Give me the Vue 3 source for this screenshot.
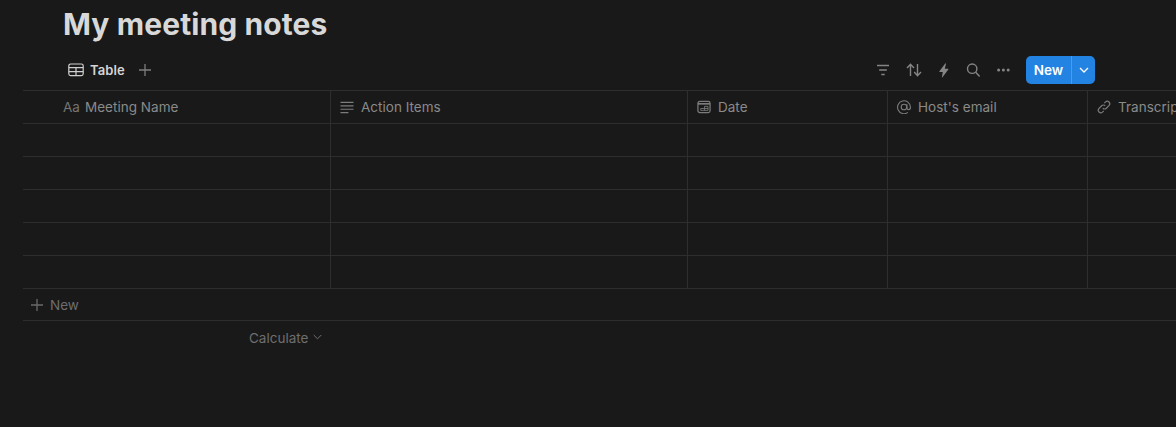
<script setup>
const columns = [
  { name: 'Meeting Name', width: 308, icon: 'aa' },
  { name: 'Action Items', width: 357, icon: 'text' },
  { name: 'Date', width: 200, icon: 'date' },
  { name: "Host's email", width: 200, icon: 'at' },
  { name: 'Transcript', width: 200, icon: 'link' },
]
const rows = [1, 2, 3, 4, 5]
</script>

<template>
  <div class="page">
    <h1 class="title">My meeting notes</h1>
    <div class="toolbar">
      <div class="tabs">
        <svg class="table-icon" width="16" height="14" viewBox="0 0 16 14" fill="none" stroke="#cfcfcf" stroke-width="1.2">
          <rect x="0.8" y="1" width="14.4" height="11.6" rx="1.8" />
          <path d="M0.8 4.7H15.2M0.8 8.6H15.2M8 4.7V12.6" />
        </svg>
        <span class="tab-label">Table</span>
        <svg class="tab-plus" width="14" height="14" viewBox="0 0 14 14" stroke="#7d7d7d" stroke-width="1.3">
          <path d="M7 1V13M1 7H13" />
        </svg>
      </div>
      <div class="actions">
        <svg width="14" height="12" viewBox="0 0 14 12" stroke="#858585" stroke-width="1.6" fill="none"><path d="M1 1.5H13M3.2 6H10.8M5.3 10.5H8.7" /></svg>
        <svg width="16" height="14" viewBox="0 0 16 14" stroke="#858585" stroke-width="1.4" fill="none"><path d="M4.5 13V1.5M1 5L4.5 1.3L8 5M11.5 1V12.5M8.2 9L11.5 12.7L15 9" /></svg>
        <svg width="12" height="15" viewBox="0 0 12 15" fill="#858585"><path d="M7.2 0.5 1.4 8.3Q1.1 8.9 1.7 9H4.8L3.9 14.2Q4 14.7 4.5 14.3L10.3 6.4Q10.6 5.8 10 5.7H6.8L8 0.8Q7.8 0.1 7.2 0.5Z" /></svg>
        <svg width="14" height="14" viewBox="0 0 14 14" stroke="#858585" stroke-width="1.4" fill="none"><circle cx="6.2" cy="5.7" r="4.7" /><path d="M9.7 9.2L13.6 13.4" /></svg>
        <svg width="14" height="4" viewBox="0 0 14 4" fill="#858585"><circle cx="2.6" cy="2" r="1.5" /><circle cx="7.4" cy="2" r="1.5" /><circle cx="12.2" cy="2" r="1.5" /></svg>
        <div class="new-button">
          <span class="new-label">New</span>
          <span class="new-arrow">
            <svg width="10" height="6" viewBox="0 0 10 6" stroke="#fff" stroke-width="1.3" fill="none"><path d="M1 1L5 5L9 1" /></svg>
          </span>
        </div>
      </div>
    </div>

    <div class="table">
      <div class="row head">
        <div
          v-for="(col, i) in columns"
          :key="col.name"
          class="cell"
          :class="{ first: i === 0 }"
          :style="{ width: col.width + 'px' }"
        >
          <span v-if="col.icon === 'aa'" class="aa">Aa</span>
          <svg v-else-if="col.icon === 'text'" class="col-icon" width="14" height="13" viewBox="0 0 15 13" stroke="#7c7c7c" stroke-width="1.2" fill="none">
            <path d="M0.5 1H14.5M0.5 4.7H14.5M0.5 8.4H14.5M0.5 12H9" />
          </svg>
          <svg v-else-if="col.icon === 'date'" class="col-icon" width="14" height="14" viewBox="0 0 15 14" fill="none" stroke="#7c7c7c">
            <rect x="1" y="1" width="13" height="12" rx="2" stroke-width="1.3" />
            <path d="M1 3.6H14" stroke-width="1.8" />
            <path d="M8 6.3H11.8V10.6H4V8.6H11.8M8 6.3V10.6" stroke-width="0.9" />
          </svg>
          <svg v-else-if="col.icon === 'at'" class="col-icon" width="14" height="14" viewBox="0 0 15 15" fill="none" stroke="#7c7c7c" stroke-width="1.2">
            <path d="M11.6 13.3A6.9 6.9 0 1 1 14.4 7.5C14.4 9.3 13.6 10.3 12.4 10.3C11.2 10.3 10.6 9.5 10.6 8.3V4.5" />
            <circle cx="7.5" cy="7.5" r="3" />
          </svg>
          <svg v-else class="col-icon" width="14" height="14" viewBox="0 0 15 15" fill="none" stroke="#7c7c7c" stroke-width="1.3">
            <path d="M6.2 8.8A2.6 2.6 0 0 0 10 8.8L13 5.8A2.7 2.7 0 0 0 9.2 2L7.8 3.4" />
            <path d="M8.8 6.2A2.6 2.6 0 0 0 5 6.2L2 9.2A2.7 2.7 0 0 0 5.8 13L7.2 11.6" />
          </svg>
          <span class="col-name">{{ col.name }}</span>
        </div>
      </div>
      <div v-for="r in rows" :key="r" class="row">
        <div
          v-for="col in columns"
          :key="col.name"
          class="cell"
          :style="{ width: col.width + 'px' }"
        ></div>
      </div>
      <div class="new-row">
        <svg width="12" height="12" viewBox="0 0 12 12" stroke="#6a6a6a" stroke-width="1.3"><path d="M6 0V12M0 6H12" /></svg>
        <span>New</span>
      </div>
      <div class="calc-row">
        <div class="calc">
          <span>Calculate</span>
          <svg width="9" height="6" viewBox="0 0 9 6" stroke="#707070" stroke-width="1" fill="none"><path d="M0.7 1L4.5 4.8L8.3 1" /></svg>
        </div>
      </div>
    </div>
  </div>
</template>

<style scoped>
.page {
  width: 1176px;
  height: 427px;
  overflow: hidden;
  background: #191919;
  font-family: Inter, "Liberation Sans", sans-serif;
  padding: 0 0 0 23px;
  box-sizing: border-box;
}
.title {
  margin: 0;
  padding: 7px 0 0 40px;
  height: 50px;
  box-sizing: border-box;
  font-size: 30px;
  line-height: 34px;
  font-weight: 700;
  color: #d8d8d8;
  letter-spacing: 0.1px;
}
.toolbar {
  height: 40px;
  display: flex;
  align-items: center;
  justify-content: space-between;
  width: 1072px;
  padding-left: 45px;
  box-sizing: border-box;
}
.tabs { display: flex; align-items: center; }
.tab-label {
  margin-left: 6px;
  font-size: 13px;
  font-weight: 600;
  color: #d4d4d4;
  letter-spacing: 0.1px;
}
.tab-plus { margin-left: 13px; }
.actions { display: flex; align-items: center; gap: 16px; }
.new-button {
  height: 28px;
  display: flex;
  border-radius: 5px;
  background: #2383e2;
  color: #fff;
  font-size: 13.5px;
  font-weight: 600;
}
.new-label {
  width: 45px;
  display: flex;
  align-items: center;
  justify-content: center;
}
.new-arrow {
  width: 23px;
  display: flex;
  align-items: center;
  justify-content: center;
  border-left: 1px solid #4d9be8;
}
.table { width: 1153px; }
.row {
  display: flex;
  height: 33px;
  box-sizing: border-box;
  border-top: 1px solid #2e2e2e;
}
.cell {
  flex: none;
  height: 100%;
  box-sizing: border-box;
  border-right: 1px solid #2e2e2e;
  display: flex;
  align-items: center;
  padding-left: 9px;
}
.cell:last-child { border-right: none; }
.cell.first { padding-left: 40px; }
.aa {
  font-size: 13.5px;
  color: #757575;
  width: 22px;
}
.col-icon { flex: none; margin-right: 7px; }
.col-name {
  font-size: 13.5px;
  color: #8a8a8a;
  white-space: nowrap;
  letter-spacing: 0.02px;
}
.new-row {
  height: 32px;
  box-sizing: border-box;
  border-top: 1px solid #2e2e2e;
  display: flex;
  align-items: center;
  padding-left: 8px;
  gap: 7px;
  font-size: 13.5px;
  color: #6e6e6e;
}
.calc-row {
  height: 36px;
  box-sizing: border-box;
  border-top: 1px solid #2e2e2e;
  display: flex;
  justify-content: flex-start;
  width: 1153px;
  padding-top: 9px;
  padding-left: 226px;
}
.calc {
  display: flex;
  align-items: flex-start;
  gap: 5px;
  font-size: 13.5px;
  line-height: 17px;
  color: #6e6e6e;
}
.calc svg { margin-top: 4px; }
</style>

<style>
html, body { background: #191919; }
</style>
